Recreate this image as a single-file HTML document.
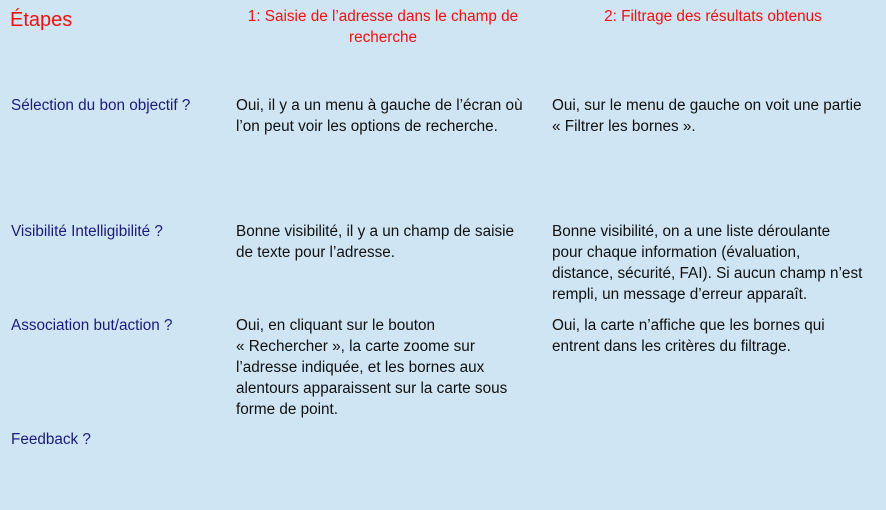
<!DOCTYPE html>
<html><head><meta charset="utf-8"><style>
body{margin:0;width:886px;height:510px;background:#cfe5f3;position:relative;overflow:hidden;font-family:"Liberation Sans",Carlito,sans-serif;}
.t{position:absolute;white-space:nowrap;font-size:15.3px;line-height:21px;color:#111;}
.l{color:#1b1b78;}
.r{color:#f01010;}
</style></head><body>
<div class="t r" style="left:10px;top:7px;font-size:20px;line-height:26px;">Étapes</div>
<div class="t r" style="left:233px;top:6px;width:300px;text-align:center;">1: Saisie de l’adresse dans le champ de<br>recherche</div>
<div class="t r" style="left:563px;top:6px;width:300px;text-align:center;">2: Filtrage des résultats obtenus</div>

<div class="t l" style="left:11px;top:95px;">Sélection du bon objectif ?</div>
<div class="t" style="left:236px;top:95px;">Oui, il y a un menu à gauche de l’écran où<br>l’on peut voir les options de recherche.</div>
<div class="t" style="left:552px;top:95px;">Oui, sur le menu de gauche on voit une partie<br>« Filtrer les bornes ».</div>

<div class="t l" style="left:11px;top:221px;">Visibilité Intelligibilité ?</div>
<div class="t" style="left:236px;top:221px;">Bonne visibilité, il y a un champ de saisie<br>de texte pour l’adresse.</div>
<div class="t" style="left:552px;top:221px;">Bonne visibilité, on a une liste déroulante<br>pour chaque information (évaluation,<br>distance, sécurité, FAI). Si aucun champ n’est<br>rempli, un message d’erreur apparaît.</div>

<div class="t l" style="left:11px;top:315px;">Association but/action ?</div>
<div class="t" style="left:236px;top:315px;">Oui, en cliquant sur le bouton<br>« Rechercher », la carte zoome sur<br>l’adresse indiquée, et les bornes aux<br>alentours apparaissent sur la carte sous<br>forme de point.</div>
<div class="t" style="left:552px;top:315px;">Oui, la carte n’affiche que les bornes qui<br>entrent dans les critères du filtrage.</div>

<div class="t l" style="left:11px;top:429px;">Feedback ?</div>
</body></html>
